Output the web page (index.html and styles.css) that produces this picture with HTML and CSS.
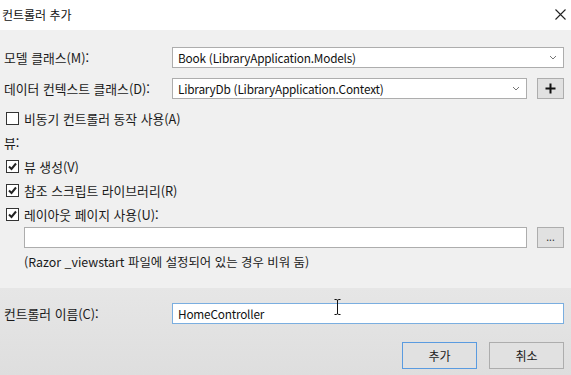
FILE: index.html
```html
<!DOCTYPE html>
<html lang="ko">
<head>
<meta charset="utf-8">
<link rel="stylesheet" href="styles.css">
</head>
<body>
<div class="dialog">
  <div class="titlebar">
    <span class="title">컨트롤러 추가</span>
    <svg class="close" width="11" height="11" viewBox="0 0 11 11"><path d="M0.5 0.5L10.5 10.5M10.5 0.5L0.5 10.5" stroke="#222" stroke-width="1.1" fill="none"/></svg>
  </div>
  <div class="content">
    <div class="row r-model">
      <span class="label">모델 클래스(M):</span>
      <div class="combo wide"><span class="val">Book (LibraryApplication.Models)</span><svg class="arrow" width="8" height="5" viewBox="0 0 8 5"><path d="M1 1L4 4L7 1" stroke="#777" stroke-width="1" fill="none"/></svg></div>
    </div>
    <div class="row r-ctx">
      <span class="label">데이터 컨텍스트 클래스(D):</span>
      <div class="combo narrow"><span class="val">LibraryDb (LibraryApplication.Context)</span><svg class="arrow" width="8" height="5" viewBox="0 0 8 5"><path d="M1 1L4 4L7 1" stroke="#777" stroke-width="1" fill="none"/></svg></div>
      <div class="btn small"><svg width="11" height="11" viewBox="0 0 11 11"><path d="M5.5 0.5V10.5M0.5 5.5H10.5" stroke="#111" stroke-width="2" fill="none"/></svg></div>
    </div>
    <div class="check r-async">
      <span class="box"></span><span>비동기 컨트롤러 동작 사용(A)</span>
    </div>
    <div class="section">뷰:</div>
    <div class="check r-c1">
      <span class="box"><svg width="11" height="11" viewBox="0 0 11 11"><path d="M2 5.5L4.5 8L9 2.5" stroke="#222" stroke-width="2" fill="none"/></svg></span><span>뷰 생성(V)</span>
    </div>
    <div class="check r-c2">
      <span class="box"><svg width="11" height="11" viewBox="0 0 11 11"><path d="M2 5.5L4.5 8L9 2.5" stroke="#222" stroke-width="2" fill="none"/></svg></span><span>참조 스크립트 라이브러리(R)</span>
    </div>
    <div class="check r-c3">
      <span class="box"><svg width="11" height="11" viewBox="0 0 11 11"><path d="M2 5.5L4.5 8L9 2.5" stroke="#222" stroke-width="2" fill="none"/></svg></span><span>레이아웃 페이지 사용(U):</span>
    </div>
    <div class="row r-layout">
      <div class="textbox layout"></div>
      <div class="btn small dots">...</div>
    </div>
    <div class="note">(Razor _viewstart 파일에 설정되어 있는 경우 비워 둠)</div>
  </div>
  <div class="footer">
    <div class="row r-name">
      <span class="label">컨트롤러 이름(C):</span>
      <div class="textbox focused"><span class="val">HomeController</span>
        <svg class="ibeam" width="7" height="16" viewBox="0 0 7 16"><path d="M0.5 0.5H2.5Q3.5 0.5 3.5 2V14Q3.5 15.5 4.5 15.5H6.5M6.5 0.5H4.5Q3.5 0.5 3.5 2M3.5 14Q3.5 15.5 2.5 15.5H0.5" stroke="#111" stroke-width="1" fill="none"/></svg>
      </div>
    </div>
    <div class="buttons">
      <div class="btn big default">추가</div>
      <div class="btn big">취소</div>
    </div>
  </div>
</div>
</body>
</html>
```
FILE: styles.css
```css
* { box-sizing: border-box; }
html, body { margin: 0; padding: 0; }
body {
  width: 571px;
  height: 375px;
  overflow: hidden;
  font-family: "Noto Sans CJK KR", "Noto Sans", sans-serif;
  font-size: 12.8px;
  color: #1a1a1a;
  background: #f0f0f0;
}
.dialog { width: 571px; height: 375px; display: flex; flex-direction: column; }
.titlebar {
  height: 30px;
  background: #fff;
  display: flex;
  align-items: center;
  justify-content: space-between;
  padding: 0 5px 0 2px;
}
.title { font-size: 12px; color: #111; margin-top: -2px; }
.close { margin-top: -2px; }
.content {
  background: #f0f0f0;
  padding: 17px 7px 0 4px;
  height: 258px;
}
.row { display: flex; align-items: center; }
.label { width: 168px; flex: none; }
.combo, .textbox {
  height: 21px;
  background: #fff;
  border: 1px solid #adadad;
  display: flex;
  align-items: center;
  padding: 0 6px 0 5px;
  position: relative;
}
.combo .val, .textbox .val { flex: 1; font-size: 11.8px; letter-spacing: -0.2px; color: #111; }
.combo .arrow { flex: none; }
.wide { width: 392px; }
.narrow { width: 355px; }
.r-ctx { margin-top: 10px; }
.btn {
  background: #e1e1e1;
  border: 1px solid #adadad;
  display: flex;
  align-items: center;
  justify-content: center;
}
.btn.small { width: 27px; height: 21px; margin-left: 10px; }
.dots { font-size: 10px; line-height: 1; padding-bottom: 2px; color: #333; }
.check { display: flex; align-items: center; height: 13px; padding-left: 2px; }
.check .box {
  width: 13px; height: 13px;
  border: 1px solid #333;
  background: #fff;
  margin-right: 5px;
  display: flex; align-items: center; justify-content: center;
  flex: none;
}
.r-async { margin-top: 13px; }
.section { margin-top: 10px; height: 16px; line-height: 16px; }
.r-c1 { margin-top: 9px; }
.r-c2, .r-c3 { margin-top: 11px; }
.r-layout { margin-top: 6px; padding-left: 20px; }
.layout { width: 503px; }
.note { margin-top: 6px; padding-left: 20px; height: 16px; line-height: 16px; font-size: 12.4px; }
.footer {
  flex: 1;
  background: linear-gradient(#e6e6e6, #dedede);
  padding: 15px 7px 0 4px;
}
.focused { width: 392px; border-color: #7aaee0; }
.ibeam { position: absolute; left: 161px; top: -5px; }
.buttons { display: flex; justify-content: flex-end; gap: 12px; margin-top: 18px; }
.btn.big { width: 75px; height: 27px; font-size: 12px; }
.default { border-color: #5a9be0; }
```
